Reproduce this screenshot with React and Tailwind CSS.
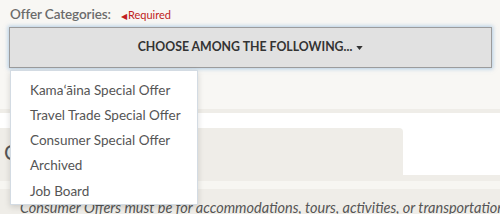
import React from "react";

export default function App() {
  const items = [
    "Kamaʻāina Special Offer",
    "Travel Trade Special Offer",
    "Consumer Special Offer",
    "Archived",
    "Job Board",
  ];
  return (
    <div
      className="relative w-[500px] h-[214px] overflow-hidden bg-[#f8f7f4]"
      style={{ fontFamily: "Lato, 'Open Sans', sans-serif" }}
    >
      <div className="px-[9px] pt-[4px] h-[109px]">
        <div className="flex items-baseline h-[23px]">
          <span className="pl-[1px] text-[13.5px] font-semibold text-[#6b6b6b] tracking-[-0.1px]">
            Offer Categories:
          </span>
          <span className="ml-[10px] text-[11px] text-[#c01d22] flex items-baseline">
            <span className="text-[8px] mr-[1px]">◀</span>Required
          </span>
        </div>
        <button className="w-[483px] h-[41px] bg-[#e1e1e1] border border-[#9c9c9c] shadow-[0_0_4px_1px_rgba(120,170,215,0.55)] flex items-center justify-center text-[12.3px] font-bold text-[#333]">
          CHOOSE AMONG THE FOLLOWING...
          <svg width="7" height="4" viewBox="0 0 8 5" className="ml-[4px]">
            <path d="M0 0 H8 L4 5 Z" fill="#333" />
          </svg>
        </button>
      </div>
      <div className="h-[4px] bg-[#efede8]" />
      <div className="bg-white h-[62px] pt-[15px]">
        <div className="w-[403px] h-[47px] bg-[#efede8] rounded-tr-[4px] flex items-center pl-[4px]">
          <span className="text-[21px] text-[#555]">Consumer</span>
        </div>
      </div>
      <div className="h-[6px] bg-[#efede8]" />
      <div className="h-[8px] bg-[#f7f6f2]" />
      <div className="h-[25px] bg-[#efede8] pl-[20px] pt-[6px]">
        <span className="italic text-[14.5px] leading-[18px] text-[#555] whitespace-nowrap">
          Consumer Offers must be for accommodations, tours, activities, or transportation
        </span>
      </div>

      <div className="absolute left-[10px] top-[70px] w-[188px] h-[135px] bg-white border border-[#d3dbe3] shadow-[0_2px_6px_rgba(0,0,0,0.15)] pt-[6px]">
        {items.map((t) => (
          <div
            key={t}
            className="h-[25.3px] flex items-center pl-[19px] text-[13.5px] text-[#555]"
          >
            {t}
          </div>
        ))}
      </div>
    </div>
  );
}
